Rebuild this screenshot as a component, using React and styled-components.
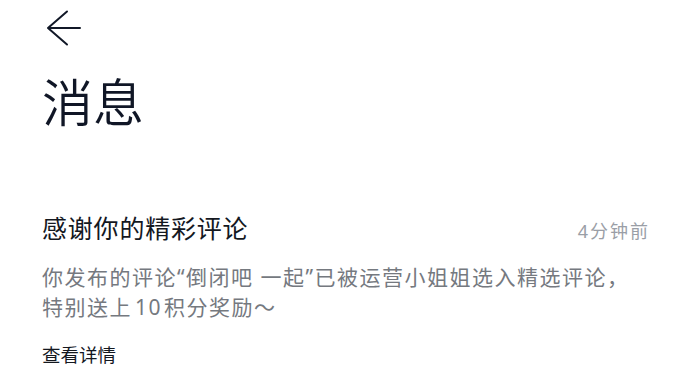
import React from "react";
import styled, { createGlobalStyle } from "styled-components";

const Global = createGlobalStyle`
  html, body { margin: 0; padding: 0; background: #ffffff; }
  body { font-family: "Noto Sans", "Noto Sans CJK SC", sans-serif; }
`;

const Page = styled.div`
  width: 690px;
  height: 387px;
  box-sizing: border-box;
  padding: 10px 40px 0 42px;
  display: flex;
  flex-direction: column;
  overflow: hidden;
`;

const BackButton = styled.button`
  width: 36px;
  height: 36px;
  padding: 0;
  margin-left: 4px;
  border: none;
  background: none;
  display: flex;
  align-items: center;
  justify-content: flex-start;
  cursor: pointer;
`;

const Title = styled.h1`
  margin: 26px 0 0 0;
  font-size: 51px;
  line-height: 60px;
  font-weight: 350;
  color: #101626;
`;

const Message = styled.section`
  margin-top: 80px;
  display: flex;
  flex-direction: column;
`;

const MessageHead = styled.div`
  display: flex;
  align-items: baseline;
  justify-content: space-between;
`;

const MessageTitle = styled.h2`
  margin: 0;
  font-size: 25px;
  line-height: 32px;
  letter-spacing: 0.8px;
  font-weight: 400;
  color: #14181f;
`;

const Time = styled.span`
  font-size: 18px;
  color: #9a9ea6;
  letter-spacing: 2px;
`;

const Body = styled.p`
  margin: 18px 0 0 0;
  font-size: 21px;
  line-height: 30px;
  letter-spacing: 1.5px;
  color: #75797f;
`;

const Num = styled.span`
  margin: 0 2px 0 3px;
`;

const Link = styled.a`
  margin-top: 21px;
  font-size: 18.5px;
  line-height: 24px;
  color: #14181f;
  text-decoration: none;
`;

export default function App() {
  return (
    <>
      <Global />
      <Page>
        <BackButton aria-label="返回">
          <svg width="36" height="36" viewBox="0 0 36 36" fill="none">
            <path d="M21 1.5 L2 18 L21 34.5 M2 18 H34" stroke="#111827" strokeWidth="2" strokeLinecap="round" strokeLinejoin="round" />
          </svg>
        </BackButton>
        <Title>消息</Title>
        <Message>
          <MessageHead>
            <MessageTitle>感谢你的精彩评论</MessageTitle>
            <Time>4分钟前</Time>
          </MessageHead>
          <Body>
            你发布的评论“倒闭吧 一起”已被运营小姐姐选入精选评论，
            <br />
            特别送上<Num>10</Num>积分奖励～
          </Body>
          <Link href="#">查看详情</Link>
        </Message>
      </Page>
    </>
  );
}
